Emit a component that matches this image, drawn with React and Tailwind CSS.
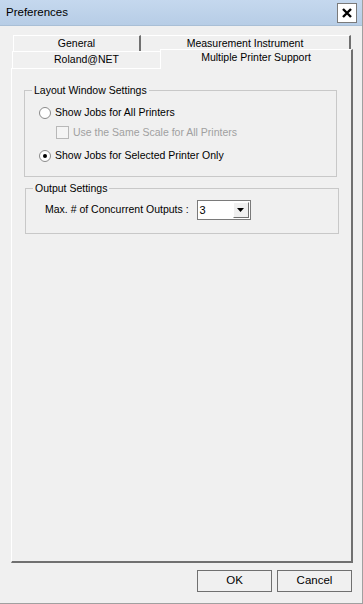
export default function App() {
  return (
    <div
      className="w-[363px] h-[604px] bg-[#f0f0f0] flex flex-col border-r border-b border-[#a0a0a0] text-[10.5px] text-black"
      style={{ fontFamily: '"Liberation Sans", Arial, sans-serif' }}
    >
      {/* title bar */}
      <div className="h-[26px] flex items-center justify-between pl-[6px] pr-[5px] bg-gradient-to-b from-[#c5d8ee] to-[#b7cde6] border-b border-[#a9bfd6]">
        <span className="text-[11.5px] text-black">Preferences</span>
        <div className="w-[20px] h-[20px] bg-white border border-[#7a7a7a] flex items-center justify-center">
          <svg width="12" height="12" viewBox="0 0 12 12">
            <path d="M2 2 L10 10 M10 2 L2 10" stroke="black" strokeWidth="2.4" />
          </svg>
        </div>
      </div>

      {/* tabs */}
      <div className="pl-[12px] pt-[9px] pr-[9px] flex flex-col">
        <div className="flex h-[16px] ml-[1px]">
          <div className="w-[128px] flex items-center justify-center border-l border-t border-white border-r-2 border-r-[#707070]">General</div>
          <div className="w-[210px] flex items-center justify-center border-t border-white border-r-2 border-r-[#707070]">Measurement Instrument</div>
        </div>
        <div className="flex h-[17px]">
          <div className="w-[148px] flex items-center justify-center border-l border-t border-white">Roland@NET</div>
          <div className="w-[193px] -mt-[2px] h-[19px] pb-[2px] flex items-center justify-center border-t border-l border-white border-r-2 border-r-[#707070] bg-[#f0f0f0]">Multiple Printer Support</div>
        </div>
      </div>

      {/* panel */}
      <div className="ml-[11px] mr-[9px] h-[495px] border-l border-white border-r-2 border-r-[#707070] border-b-2 border-b-[#707070] flex flex-col">
        <div className="h-[1px] w-[149px] bg-white" />
        <div className="pl-[12px] pr-[14px] pt-[14px] flex flex-col gap-[4px]">
          <fieldset className="border border-[#c8c8c8] h-[94px] px-[14px] pb-0 m-0">
            <legend className="px-[2px] -ml-[7px]">Layout Window Settings</legend>
            <div className="flex flex-col pt-[5px]">
              <label className="flex items-center gap-[4px] h-[18px]">
                <span className="w-[12px] h-[12px] rounded-full bg-white border border-[#8a8a8a]" />
                <span>Show Jobs for All Printers</span>
              </label>
              <label className="flex items-center gap-[4px] h-[22px] ml-[17px] text-[#a0a0a0]">
                <span className="w-[13px] h-[13px] bg-[#f4f4f4] border border-[#b8b8b8]" />
                <span>Use the Same Scale for All Printers</span>
              </label>
              <label className="flex items-center gap-[4px] h-[24px]">
                <span className="w-[12px] h-[12px] rounded-full bg-white border border-[#8a8a8a] flex items-center justify-center">
                  <span className="w-[4px] h-[4px] rounded-full bg-black" />
                </span>
                <span>Show Jobs for Selected Printer Only</span>
              </label>
            </div>
          </fieldset>

          <fieldset className="border border-[#c8c8c8] h-[53px] px-[19px] m-0 ml-[1px] mr-[-2px]">
            <legend className="px-[2px] -ml-[12px]">Output Settings</legend>
            <div className="flex items-center gap-[8px] pt-[3px]">
              <span>Max. # of Concurrent Outputs :</span>
              <div className="w-[54px] h-[20px] bg-white border border-[#7a7a7a] flex items-center justify-between pl-[2px] pr-[1px]">
                <span className="text-[11px]">3</span>
                <div className="w-[16px] h-[16px] bg-[#f0f0f0] border-r border-b border-[#707070] border-l border-t border-l-white border-t-white flex items-center justify-center">
                  <svg width="7" height="4" viewBox="0 0 7 4">
                    <path d="M0 0 H7 L3.5 4 Z" fill="black" />
                  </svg>
                </div>
              </div>
            </div>
          </fieldset>
        </div>
      </div>

      {/* buttons */}
      <div className="flex justify-end gap-[5px] pr-[10px] pt-[7px]">
        <button className="w-[75px] h-[22px] bg-[#f0f0f0] border border-[#707070] text-[11.5px]">OK</button>
        <button className="w-[75px] h-[22px] bg-[#f0f0f0] border border-[#707070] text-[11.5px]">Cancel</button>
      </div>
    </div>
  );
}
